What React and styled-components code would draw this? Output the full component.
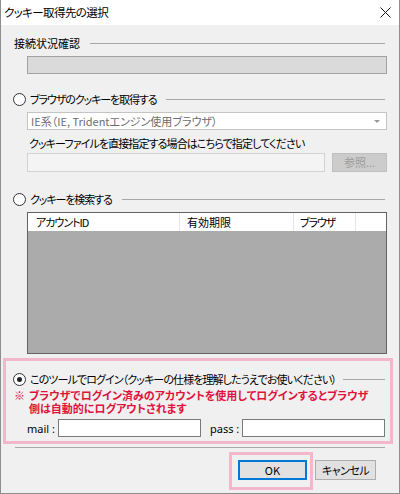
import React from "react";
import styled, { createGlobalStyle } from "styled-components";

const GlobalStyle = createGlobalStyle`
  html, body {
    margin: 0;
    padding: 0;
    background: #ffffff;
  }
  body {
    font-family: "Noto Sans CJK JP", "Noto Sans", sans-serif;
    font-size: 11px;
    color: #000;
    font-feature-settings: "palt";
  }
`;

const Window = styled.div`
  width: 400px;
  height: 494px;
  box-sizing: border-box;
  border: 1px solid #8e8e8e;
  border-top: none;
  background: #f0f0f0;
  display: flex;
  flex-direction: column;
  overflow: hidden;
`;

const TitleBar = styled.div`
  height: 25px;
  flex: none;
  background: #ffffff;
  display: flex;
  align-items: center;
  justify-content: space-between;
  padding: 0 8px 0 3px;
  font-size: 11.5px;
  line-height: 1;
`;

const Content = styled.div`
  display: flex;
  flex-direction: column;
  padding: 0 14px 0 12px;
`;

// text run with its own tracking, the CJK font is wider than the dialog's
const Text = styled.span`
  letter-spacing: ${p => p.$ls || 0}px;
  white-space: nowrap;
`;

const GroupRow = styled.div`
  display: flex;
  align-items: center;
  height: 16px;
  margin-top: ${p => p.$top || 0}px;
  margin-left: ${p => p.$indent || 0}px;
  white-space: nowrap;
  line-height: 1;
`;

const GroupLine = styled.div`
  flex: 1;
  height: 1px;
  background: #a8a8a8;
  margin-left: ${p => p.$gap || 10}px;
`;

const RadioMark = styled.span`
  width: 11px;
  height: 11px;
  flex: none;
  border: 1px solid #333;
  border-radius: 50%;
  background: #fff;
  margin-right: 4px;
  display: flex;
  align-items: center;
  justify-content: center;
  &::after {
    content: "";
    width: 5px;
    height: 5px;
    border-radius: 50%;
    background: ${p => (p.$checked ? "#222" : "transparent")};
  }
`;

const Indented = styled.div`
  margin: ${p => p.$top || 0}px -2px 0 14px;
`;

const StatusBar = styled(Indented)`
  height: 18px;
  box-sizing: border-box;
  border: 1px solid #a2a2a2;
  background: #dadada;
`;

const Dropdown = styled(Indented)`
  height: 18px;
  box-sizing: border-box;
  border: 1px solid #c4c4c4;
  background: #fff;
  color: #6d6d6d;
  display: flex;
  align-items: center;
  justify-content: space-between;
  padding: 0 6px 0 3px;
  line-height: 1;
`;

const Arrow = styled.span`
  width: 0;
  height: 0;
  border-left: 3px solid transparent;
  border-right: 3px solid transparent;
  border-top: 3px solid #9a9a9a;
`;

const Caption = styled.div`
  margin: 6px 0 0 16px;
  height: 14px;
  line-height: 14px;
`;

const FileRow = styled(Indented)`
  display: flex;
  gap: 7px;
  height: 19px;
`;

const TextBox = styled.div`
  box-sizing: border-box;
  height: ${p => p.$h || 19}px;
  width: ${p => (p.$w ? `${p.$w}px` : "auto")};
  flex: ${p => (p.$w ? "none" : 1)};
  border: 1px solid ${p => (p.$disabled ? "#d2d2d2" : "#7a7a7a")};
  background: ${p => (p.$disabled ? "#f4f4f4" : "#fff")};
`;

const Button = styled.div`
  box-sizing: border-box;
  height: ${p => p.$h || 20}px;
  width: ${p => p.$w}px;
  flex: none;
  display: flex;
  align-items: center;
  justify-content: center;
  line-height: 1;
  border: ${p =>
    p.$disabled ? "1px solid #bfbfbf" : p.$primary ? "2px solid #0078d7" : "1px solid #adadad"};
  background: ${p => (p.$disabled ? "#cccccc" : "#e1e1e1")};
  color: ${p => (p.$disabled ? "#9d9d9d" : "#000")};
`;

const Table = styled(Indented)`
  height: 142px;
  box-sizing: border-box;
  border: 1px solid #636363;
  background: #ababab;
  display: flex;
  flex-direction: column;
`;

const HeaderRow = styled.div`
  height: 18px;
  background: #fff;
  display: grid;
  grid-template-columns: 152px 114px 62px 1fr;
`;

const HeaderCell = styled.div`
  border-right: 1px solid #e5e5e5;
  display: flex;
  align-items: center;
  padding-left: ${p => p.$pad || 7}px;
  line-height: 1;
  white-space: nowrap;
  &:last-child {
    border-right: none;
  }
`;

const Highlight = styled.div`
  border: 3px solid #f4b6cb;
`;

const LoginBox = styled(Highlight)`
  margin: 4px -8px 0 -10px;
  padding: 10px 5px 4px 7px;
  display: flex;
  flex-direction: column;
`;

const Notice = styled.div`
  display: flex;
  margin: 2px 0 0 0;
  color: #e0123d;
  font-weight: 700;
  line-height: 13px;
  font-size: 11px;
  white-space: nowrap;
`;

const NoticeMark = styled.span`
  width: 15px;
  flex: none;
  padding-left: 1px;
`;

const NoticeLines = styled.div`
  display: flex;
  flex-direction: column;
`;

const LoginRow = styled.div`
  display: flex;
  align-items: center;
  margin-top: 4px;
  font-family: "Noto Sans", sans-serif;
  font-size: 11px;
`;

const FieldLabel = styled.span`
  margin: ${p => p.$m};
  line-height: 1;
  white-space: nowrap;
`;

const Separator = styled.div`
  height: 1px;
  background: #a8a8a8;
  margin: 3px 0 0 2px;
`;

const ButtonBar = styled.div`
  display: flex;
  justify-content: flex-end;
  align-items: flex-start;
  margin: 4px 9px 0 0;
  gap: 2px;
`;

const OkFrame = styled(Highlight)`
  padding: 5px 3px 7px 6px;
`;

const CancelWrap = styled.div`
  padding-top: 8px;
`;

const CloseIcon = () => (
  <svg width="11" height="11" viewBox="0 0 11 11">
    <path d="M0.5 0.5 L10.5 10.5 M10.5 0.5 L0.5 10.5" stroke="#111" strokeWidth="1" />
  </svg>
);

const App = () => (
  <>
    <GlobalStyle />
    <Window>
      <TitleBar>
        <Text $ls={-0.6}>クッキー取得先の選択</Text>
        <CloseIcon />
      </TitleBar>
      <Content>
        <GroupRow $top={10} $indent={1}>
          <Text>接続状況確認</Text>
          <GroupLine />
        </GroupRow>
        <StatusBar $top={5} />

        <GroupRow $top={17}>
          <RadioMark />
          <Text $ls={-1.1}>ブラウザのクッキーを取得する</Text>
          <GroupLine />
        </GroupRow>
        <Dropdown $top={5}>
          <Text>IE系（IE, Tridentエンジン使用ブラウザ）</Text>
          <Arrow />
        </Dropdown>
        <Caption>
          <Text $ls={-0.9}>クッキーファイルを直接指定する場合はこちらで指定してください</Text>
        </Caption>
        <FileRow $top={3}>
          <TextBox $disabled />
          <Button $disabled $w={55} $h={19}>
            参照...
          </Button>
        </FileRow>

        <GroupRow $top={19}>
          <RadioMark />
          <Text $ls={-1.1}>クッキーを検索する</Text>
          <GroupLine />
        </GroupRow>
        <Table $top={5}>
          <HeaderRow>
            <HeaderCell $pad={8}>
              <Text $ls={-1}>アカウントID</Text>
            </HeaderCell>
            <HeaderCell $pad={7}>有効期限</HeaderCell>
            <HeaderCell $pad={6}>
              <Text $ls={-1.2}>ブラウザ</Text>
            </HeaderCell>
            <HeaderCell />
          </HeaderRow>
        </Table>

        <LoginBox>
          <GroupRow>
            <RadioMark $checked />
            <Text $ls={-0.9}>
              このツールでログイン（クッキーの仕様を理解したうえでお使いください）
            </Text>
            <GroupLine $gap={7} />
          </GroupRow>
          <Notice>
            <NoticeMark>※</NoticeMark>
            <NoticeLines>
              <span>ブラウザでログイン済みのアカウントを使用してログインするとブラウザ</span>
              <span>側は自動的にログアウトされます</span>
            </NoticeLines>
          </Notice>
          <LoginRow>
            <FieldLabel $m="0 3px 0 14px">mail :</FieldLabel>
            <TextBox $w={143} $h={18} />
            <FieldLabel $m="0 3px 0 9px">pass :</FieldLabel>
            <TextBox $h={18} />
          </LoginRow>
        </LoginBox>

        <Separator />
        <ButtonBar>
          <OkFrame>
            <Button $primary $w={69}>
              OK
            </Button>
          </OkFrame>
          <CancelWrap>
            <Button $w={61}>
              <Text $ls={-0.5}>キャンセル</Text>
            </Button>
          </CancelWrap>
        </ButtonBar>
      </Content>
    </Window>
  </>
);

export default App;
